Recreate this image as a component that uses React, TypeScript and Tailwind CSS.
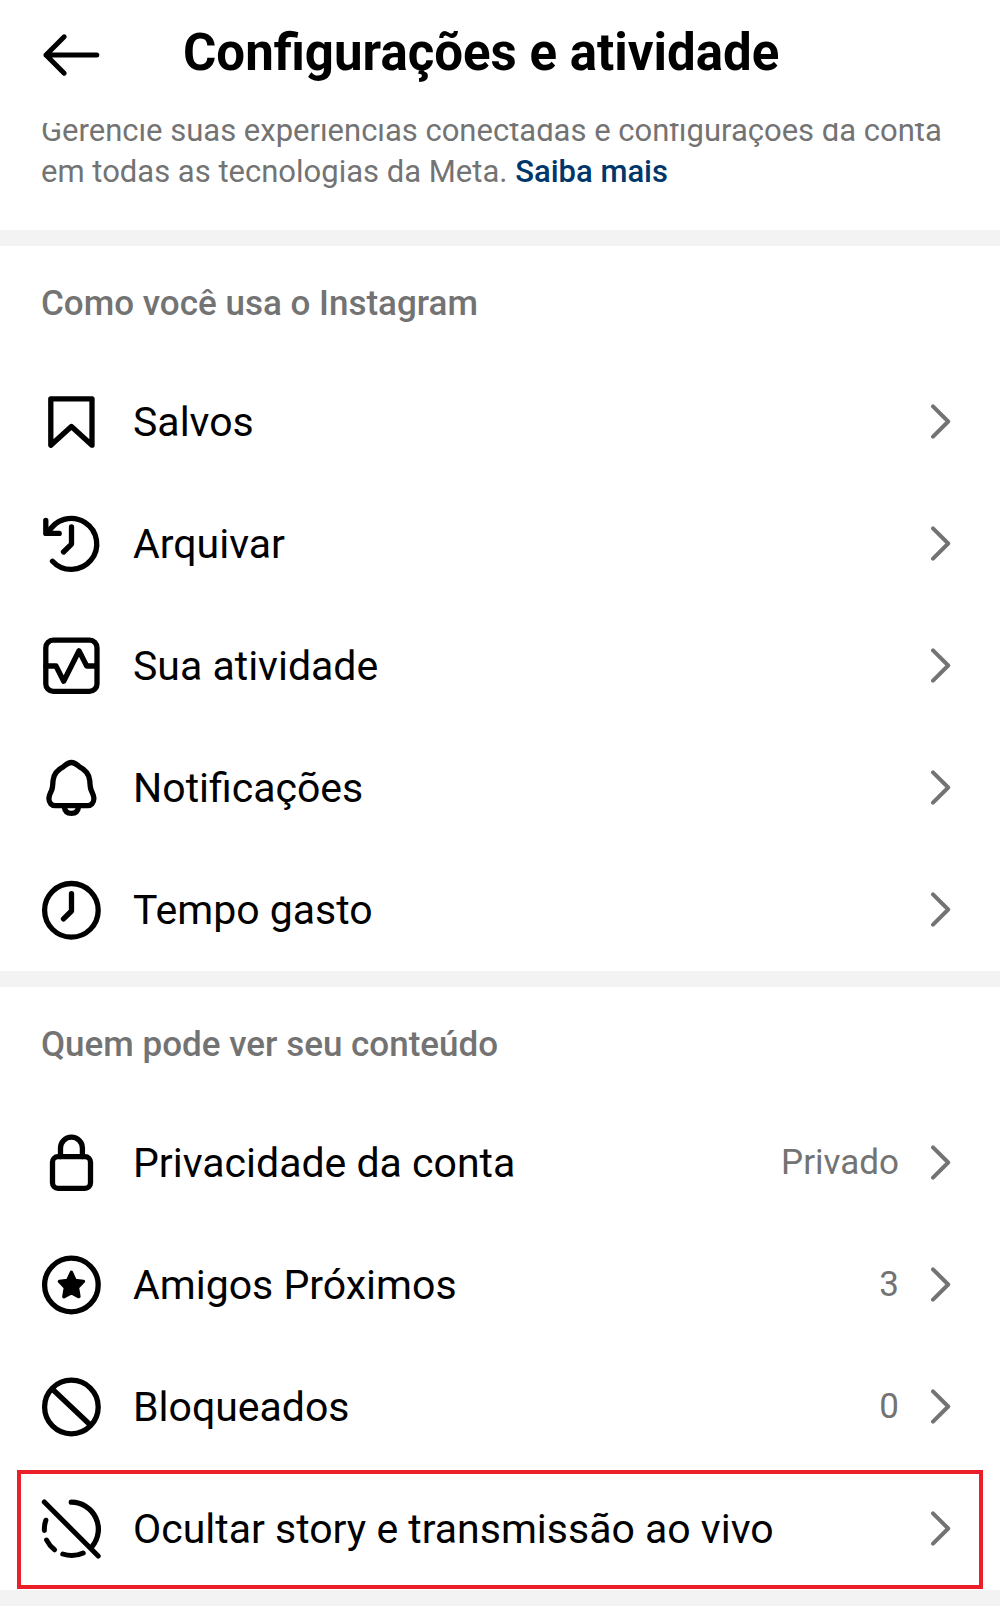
import type { ReactNode } from "react";

function Icon({ children }: { children: ReactNode }) {
  return (
    <svg
      viewBox="0 0 60 60"
      className="size-[60px] shrink-0 overflow-visible"
      fill="none"
      stroke="currentColor"
      strokeWidth="5.3"
      strokeLinecap="round"
      strokeLinejoin="round"
      aria-hidden="true"
    >
      {children}
    </svg>
  );
}

const icons = {
  bookmark: <path d="M9.8 6.8H51V53.2L30.4 34.5L9.8 53.2Z" />,
  archive: (
    <>
      <path d="M7.2 19A25.5 25.5 0 1 1 11.5 47.2" />
      <path d="M4.8 6.3V19.4H18.2" />
      <path d="M30.5 12.9V30.1L22.5 38" />
    </>
  ),
  activity: (
    <>
      <rect x="4.8" y="4.2" width="51.2" height="51.2" rx="7.5" />
      <path d="M5 30H15L22.7 45.2L38 14.8L45.7 30H55.5" />
    </>
  ),
  bell: (
    <>
      <path d="M30.4 4.5C26.9 4.5 25.3 6.3 22.6 8.6C17 11.4 12.8 16 12.1 22.2C11.7 25.6 11.9 28.8 10.8 31.8C9.6 35 7.9 37 7.9 40.6C7.9 45 10.8 47.7 14.4 47.7H46.4C50 47.7 52.9 45 52.9 40.6C52.9 37 51.2 35 50 31.8C48.9 28.8 49.1 25.6 48.7 22.2C48 16 43.8 11.4 38.2 8.6C35.5 6.3 33.9 4.5 30.4 4.5Z" />
      <path d="M23.2 48.5C23.7 53 26.5 55.4 30.4 55.4S37.1 53 37.6 48.5" />
    </>
  ),
  clock: (
    <>
      <circle cx="30.4" cy="30.3" r="26.8" />
      <path d="M30.5 13.6V31L22.5 38.9" />
    </>
  ),
  lock: (
    <>
      <rect x="11.5" y="23.7" width="38" height="31.6" rx="5.5" />
      <path d="M19.5 23.5V15A10.95 10.95 0 0 1 41.4 15V23.5" />
    </>
  ),
  star: (
    <>
      <circle cx="30.4" cy="30" r="26.8" />
      <path
        d="M30.4 17.4L34.1 25.4L42.4 26.4L36.4 32.6L37.9 41.6L30.4 37.6L22.9 41.6L24.4 32.6L18.4 26.4L26.7 25.4Z"
        fill="currentColor"
        strokeWidth="3.5"
      />
    </>
  ),
  blocked: (
    <>
      <circle cx="30.4" cy="30" r="26.8" />
      <path d="M12.3 13L48.8 47.5" />
    </>
  ),
  hidden: (
    <>
      <path d="M3.3 3L57.2 57" strokeWidth="5" />
      <path d="M30.3 3.2A27 27 0 0 1 51 47.6" />
      <path d="M4.9 21.2A27 27 0 0 0 3.4 31.5" strokeWidth="5" />
      <path d="M5.6 41A27 27 0 0 0 13.6 50.8" strokeWidth="5" />
      <path d="M21.8 55A27 27 0 0 0 42.2 54" strokeWidth="5" />
    </>
  ),
};

type Item = {
  icon: keyof typeof icons;
  label: string;
  value?: string;
  highlighted?: boolean;
};

const sections: { title: string; items: Item[] }[] = [
  {
    title: "Como você usa o Instagram",
    items: [
      { icon: "bookmark", label: "Salvos" },
      { icon: "archive", label: "Arquivar" },
      { icon: "activity", label: "Sua atividade" },
      { icon: "bell", label: "Notificações" },
      { icon: "clock", label: "Tempo gasto" },
    ],
  },
  {
    title: "Quem pode ver seu conteúdo",
    items: [
      { icon: "lock", label: "Privacidade da conta", value: "Privado" },
      { icon: "star", label: "Amigos Próximos", value: "3" },
      { icon: "blocked", label: "Bloqueados", value: "0" },
      { icon: "hidden", label: "Ocultar story e transmissão ao vivo", highlighted: true },
    ],
  },
];

function Row({ item }: { item: Item }) {
  return (
    <li>
      <button
        type="button"
        className="relative flex h-[122px] w-full items-center gap-8 pr-[49px] pl-[41px] text-left"
      >
        <Icon>{icons[item.icon]}</Icon>
        <span className="flex-1 text-[41px] leading-[48px]">{item.label}</span>
        {item.value && (
          <span className="text-[35px] leading-[48px] text-[#737373]">{item.value}</span>
        )}
        <svg
          viewBox="0 0 20 36"
          className="h-9 w-5 shrink-0 text-[#737373]"
          fill="none"
          stroke="currentColor"
          strokeWidth="4"
          strokeLinecap="round"
          strokeLinejoin="round"
          aria-hidden="true"
        >
          <path d="M2 2.3L17.2 17.5L2 32.7" />
        </svg>
        {item.highlighted && (
          <span className="pointer-events-none absolute inset-x-[17px] top-0.5 bottom-px border-4 border-[#ea1f27]" />
        )}
      </button>
    </li>
  );
}

function Divider() {
  return <div className="h-4 bg-[#f3f3f3]" />;
}

export default function App() {
  return (
    <div className="min-h-screen bg-white font-[Roboto,sans-serif] text-black">
      <header className="sticky top-0 z-10 bg-white pb-[18px]">
        <div className="flex h-[105px] items-center gap-[82px] px-[41px]">
          <button type="button" aria-label="Voltar">
            <Icon>
              <path d="M5 32H55.8M23.2 13.8L5 32L23.2 50.2" strokeWidth="5" />
            </Icon>
          </button>
          <h1 className="text-[51px] leading-[60px] font-bold">Configurações e atividade</h1>
        </div>
      </header>
      <main>
        <p className="-mt-[13px] px-[41px] pb-[38px] text-[31px] leading-[41px] text-[#737373]">
          Gerencie suas experiências conectadas e configurações da conta em todas as tecnologias da
          Meta.{" "}
          <a href="#saiba-mais" className="font-medium text-[#00376b]">
            Saiba mais
          </a>
        </p>
        <Divider />
        {sections.map((section) => (
          <section key={section.title}>
            <h2 className="flex h-[115px] items-center px-[41px] text-[35px] leading-[48px] font-medium text-[#737373]">
              {section.title}
            </h2>
            <ul>
              {section.items.map((item) => (
                <Row key={item.label} item={item} />
              ))}
            </ul>
            <Divider />
          </section>
        ))}
      </main>
    </div>
  );
}
